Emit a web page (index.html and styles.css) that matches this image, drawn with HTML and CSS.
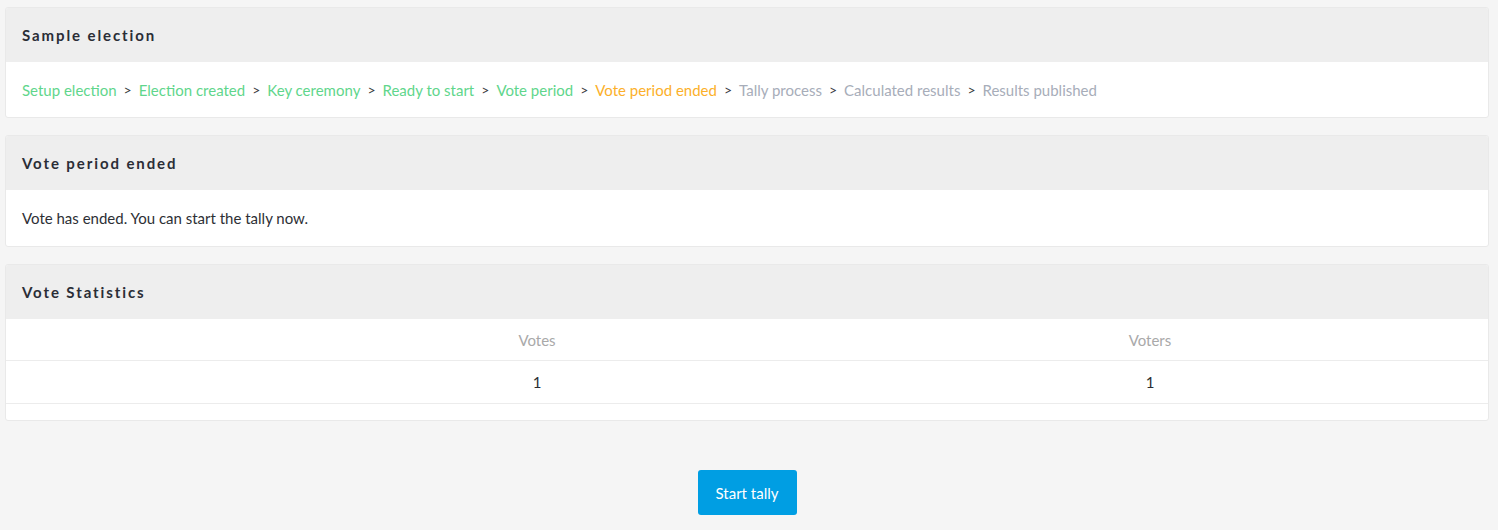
FILE: index.html
```html
<!DOCTYPE html>
<html lang="en">
<head>
<meta charset="utf-8">
<title>Sample election</title>
<link rel="stylesheet" href="styles.css">
</head>
<body>
<main class="page">
  <section class="card">
    <h2 class="card-header">Sample election</h2>
    <div class="card-body">
      <nav class="steps">
        <span class="step done">Setup election</span><span class="sep">&gt;</span>
        <span class="step done">Election created</span><span class="sep">&gt;</span>
        <span class="step done">Key ceremony</span><span class="sep">&gt;</span>
        <span class="step done">Ready to start</span><span class="sep">&gt;</span>
        <span class="step done">Vote period</span><span class="sep">&gt;</span>
        <span class="step current">Vote period ended</span><span class="sep">&gt;</span>
        <span class="step todo">Tally process</span><span class="sep">&gt;</span>
        <span class="step todo">Calculated results</span><span class="sep">&gt;</span>
        <span class="step todo">Results published</span>
      </nav>
    </div>
  </section>

  <section class="card">
    <h2 class="card-header">Vote period ended</h2>
    <div class="card-body tall">
      <p class="text">Vote has ended. You can start the tally now.</p>
    </div>
  </section>

  <section class="card">
    <h2 class="card-header">Vote Statistics</h2>
    <div class="stats">
      <div class="stats-row head">
        <div class="cell"></div>
        <div class="cell">Votes</div>
        <div class="cell">Voters</div>
        <div class="cell"></div>
      </div>
      <div class="stats-row">
        <div class="cell"></div>
        <div class="cell">1</div>
        <div class="cell">1</div>
        <div class="cell"></div>
      </div>
    </div>
  </section>

  <div class="actions">
    <button class="btn" type="button">Start tally</button>
  </div>
</main>
</body>
</html>
```

FILE: styles.css
```css
* { box-sizing: border-box; }
html, body { margin: 0; padding: 0; }
body {
  background: #f5f5f5;
  font-family: "Lato", "Liberation Sans", sans-serif;
  font-size: 15px;
  color: #2b2d33;
}
.page {
  padding: 7px 9px 0 5px;
}
.card {
  background: #fff;
  border: 1px solid #e9e9e9;
  border-radius: 3px;
  margin-bottom: 17px;
  overflow: hidden;
}
.card-header {
  margin: 0;
  height: 54px;
  display: flex;
  align-items: center;
  padding: 0 16px;
  background: #eeeeee;
  font-size: 15px;
  font-weight: 700;
  letter-spacing: 1.9px;
  color: #2a2d36;
}
.card-body {
  height: 55px;
  display: flex;
  align-items: center;
  padding: 0 16px;
}
.card-body.tall { height: 56px; }
.steps {
  display: flex;
  align-items: center;
  gap: 7px;
  white-space: nowrap;
}
.step.done { color: #5fd68c; }
.step.current { color: #fcb02a; }
.step.todo { color: #a7adb9; }
.sep { color: #3a3c42; font-size: 14px; }
.text { margin: 0; color: #2d2f35; }
.stats-row {
  display: grid;
  grid-template-columns: 226px 610px 616px 1fr;
  height: 43px;
  align-items: center;
  border-bottom: 1px solid #ececec;
  text-align: center;
}
.stats-row.head { height: 42px; color: #a9a9a9; }
.stats { padding-bottom: 16px; }
.actions {
  display: flex;
  justify-content: center;
  padding-top: 32px;
}
.btn {
  width: 99px;
  height: 45px;
  border: none;
  border-radius: 3px;
  background: #009ee3;
  color: #fff;
  font-family: inherit;
  font-size: 15px;
}
```
